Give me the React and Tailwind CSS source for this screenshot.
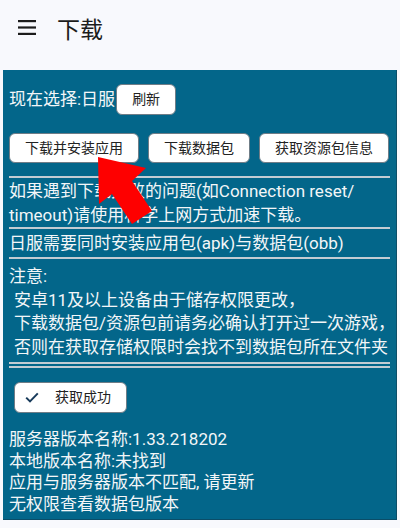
import React from 'react';

const Divider = ({ className = '' }) => (
    <div className={`h-[2px] bg-[#c3ccd3] ${className}`} />
);

const Btn = ({ children, className = '' }) => (
    <button className={`shrink-0 whitespace-nowrap rounded-[6px] border border-[#6f7d87] bg-white px-[15px] text-[14px] text-[#222] ${className}`}>
        {children}
    </button>
);

export default function App() {
    return (
        <div className="relative h-[528px] w-full overflow-hidden bg-[#f8f9fd] font-['Roboto','Noto_Sans_CJK_SC',sans-serif]">
            {/* Top bar */}
            <header className="flex h-[70px] items-start">
                <svg className="ml-[18px] mt-[20px]" width="18" height="15" viewBox="0 0 18 15">
                    <rect x="0" y="0" width="18" height="2.2" fill="#1c1c1c" />
                    <rect x="0" y="6.4" width="18" height="2.2" fill="#1c1c1c" />
                    <rect x="0" y="12.8" width="18" height="2.2" fill="#1c1c1c" />
                </svg>
                <h1 className="ml-[21px] mt-[17px] text-[23px] leading-[27px] text-[#1b1b1b]">下载</h1>
            </header>

            {/* Panel */}
            <main className="mx-[3px] whitespace-nowrap border-b border-r border-[#0a4d68] bg-[#03668a] px-[6px] pb-[3px] pt-[14px] text-[17px] text-[#f3f6f8]">
                <div className="flex h-[31px] items-center">
                    <span>现在选择:日服</span>
                    <Btn className="ml-px h-[31px]">刷新</Btn>
                </div>

                <div className="mt-[18px] flex gap-[9px]">
                    <Btn className="h-[30px]">下载并安装应用</Btn>
                    <Btn className="h-[30px]">下载数据包</Btn>
                    <Btn className="h-[30px]">获取资源包信息</Btn>
                </div>

                <Divider className="mt-[13px]" />
                <div className="pt-[1px] leading-[24px]">
                    <div>如果遇到下载失败的问题(如Connection reset/</div>
                    <div>timeout)请使用科学上网方式加速下载。</div>
                </div>
                <Divider />
                <div className="leading-[28px]">日服需要同时安装应用包(apk)与数据包(obb)</div>
                <Divider />
                <div className="pb-[2px] pt-[6px] leading-[23.7px]">
                    <div>注意:</div>
                    <div className="pl-[5px]">安卓11及以上设备由于储存权限更改，</div>
                    <div className="pl-[5px]">下载数据包/资源包前请务必确认打开过一次游戏，</div>
                    <div className="pl-[5px]">否则在获取存储权限时会找不到数据包所在文件夹</div>
                </div>
                <Divider />
                <Divider className="mt-[2px]" />

                <button className="ml-[5px] mt-[14px] flex h-[31px] items-center rounded-[6px] border border-[#6f7d87] bg-white pl-[10px] pr-[15px] text-[14px] text-[#222]">
                    <svg width="14" height="11" viewBox="0 0 14 11" fill="none">
                        <path d="M1.2 5.6 L5 9.4 L12.8 1.4" stroke="#183b5b" strokeWidth="2" />
                    </svg>
                    <span className="ml-[16px]">获取成功</span>
                </button>

                <div className="mt-[16px] leading-[21.7px]">
                    <div>服务器版本名称:1.33.218202</div>
                    <div>本地版本名称:未找到</div>
                    <div>应用与服务器版本不匹配, 请更新</div>
                    <div>无权限查看数据包版本</div>
                </div>
            </main>

            {/* Red arrow overlay */}
            <svg className="pointer-events-none absolute left-0 top-0" width="400" height="528" viewBox="0 0 400 528">
                <polygon
                    points="98,157 146,168 132,181 152,211 132,224 112,194 99,204"
                    fill="#fe0000"
                />
            </svg>
        </div>
    );
}
